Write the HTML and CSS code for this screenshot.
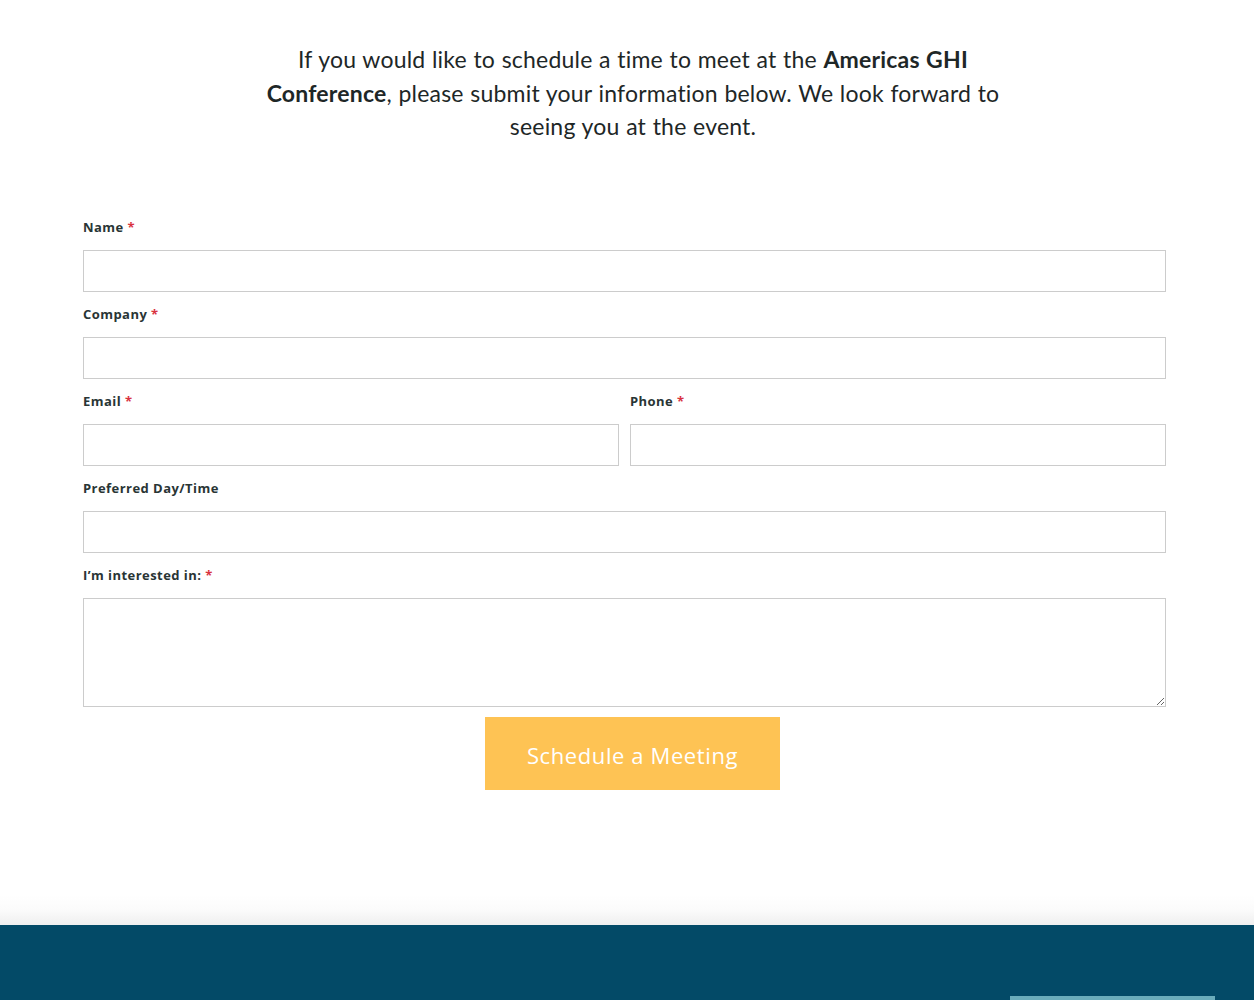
FILE: index.html
```html
<!DOCTYPE html>
<html lang="en">
<head>
<meta charset="utf-8">
<title>Schedule a Meeting</title>
<link rel="stylesheet" href="styles.css">
</head>
<body>
<main class="page">
  <section class="intro">
    <p>If you would like to schedule a time to meet at the <strong>Americas GHI Conference</strong>, please submit your information below. We look forward to seeing you at the event.</p>
  </section>

  <form class="meeting-form" onsubmit="return false;">
    <div class="field">
      <label class="field-label" for="name">Name <span class="req">*</span></label>
      <input class="field-input" id="name" type="text">
    </div>
    <div class="field">
      <label class="field-label" for="company">Company <span class="req">*</span></label>
      <input class="field-input" id="company" type="text">
    </div>
    <div class="field-row">
      <div class="field">
        <label class="field-label" for="email">Email <span class="req">*</span></label>
        <input class="field-input" id="email" type="email">
      </div>
      <div class="field">
        <label class="field-label" for="phone">Phone <span class="req">*</span></label>
        <input class="field-input" id="phone" type="tel">
      </div>
    </div>
    <div class="field">
      <label class="field-label" for="daytime">Preferred Day/Time</label>
      <input class="field-input" id="daytime" type="text">
    </div>
    <div class="field field-last">
      <label class="field-label" for="interest">I’m interested in: <span class="req">*</span></label>
      <textarea class="field-input field-textarea" id="interest"></textarea>
    </div>
    <div class="actions">
      <button class="submit-btn" type="submit">Schedule a Meeting</button>
    </div>
  </form>
</main>

<div class="footer-fade"></div>
<footer class="site-footer">
  <div class="footer-inner">
    <div class="footer-tab"></div>
  </div>
</footer>
</body>
</html>
```

FILE: styles.css
```css
* {
  box-sizing: border-box;
}

html, body {
  margin: 0;
  padding: 0;
  background: #ffffff;
}

body {
  font-family: "Lato", "Liberation Sans", sans-serif;
  color: #1e2727;
  overflow: hidden;
}

.page {
  padding-top: 43px;
}

.intro {
  max-width: 772px;
  margin: 0 auto;
  padding-left: 12px;
}

.intro p {
  margin: 0;
  font-size: 23px;
  line-height: 33.5px;
  text-align: center;
  letter-spacing: 0.2px;
  word-spacing: 0.5px;
  color: #1e2727;
}

.intro strong {
  font-weight: 700;
}

.meeting-form {
  width: 1083px;
  margin: 75px 0 0 83px;
}

.field {
  display: flex;
  flex-direction: column;
  margin-bottom: 14px;
}

.field-label {
  font-family: "Open Sans", "Liberation Sans", sans-serif;
  font-size: 13px;
  font-weight: 700;
  line-height: 16px;
  letter-spacing: 0.45px;
  margin-bottom: 15px;
  color: #293535;
}

.req {
  color: #d9333f;
}

.field-input {
  display: block;
  width: 100%;
  height: 42px;
  margin: 0;
  padding: 8px 10px;
  border: 1px solid #cccccc;
  border-radius: 0;
  background: #ffffff;
  font-family: inherit;
  font-size: 14px;
  outline: none;
}

.field-textarea {
  height: 109px;
  resize: vertical;
}

.field-row {
  display: grid;
  grid-template-columns: 1fr 1fr;
  column-gap: 11px;
}

.field-last {
  margin-bottom: 10px;
}

.actions {
  display: flex;
  justify-content: center;
  padding-left: 16px;
}

.submit-btn {
  width: 295px;
  height: 73px;
  padding: 4px 0 0;
  border: 0;
  border-radius: 0;
  background: #fec354;
  color: #ffffff;
  font-family: "Open Sans", "Liberation Sans", sans-serif;
  font-size: 22px;
  letter-spacing: 0.6px;
  cursor: pointer;
}

.footer-fade {
  margin-top: 105px;
  height: 30px;
  background: linear-gradient(to bottom, #ffffff 0%, #fbfbfb 50%, #efefef 100%);
}

.site-footer {
  background: #034a67;
  height: 200px;
}

.footer-inner {
  display: flex;
  justify-content: flex-end;
  padding: 71px 39px 0 0;
}

.footer-tab {
  width: 205px;
  height: 20px;
  background: #6aacbb;
}
```
